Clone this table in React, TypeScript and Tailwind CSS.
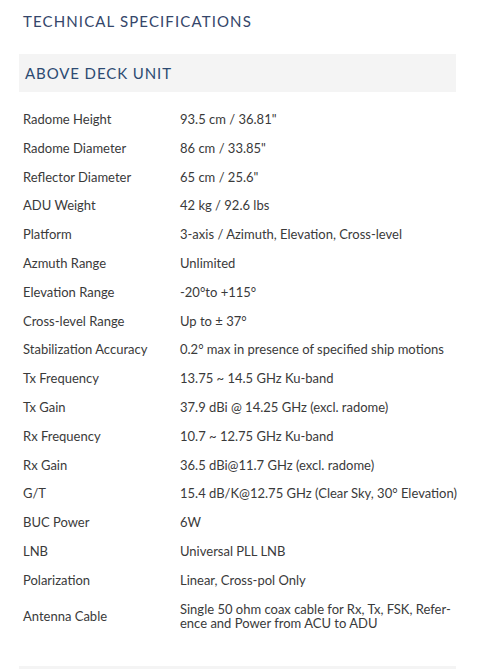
import React from "react";

const rows: [string, React.ReactNode][] = [
  ["Radome Height", "93.5 cm / 36.81\""],
  ["Radome Diameter", "86 cm / 33.85\""],
  ["Reflector Diameter", "65 cm / 25.6\""],
  ["ADU Weight", "42 kg / 92.6 lbs"],
  ["Platform", "3-axis / Azimuth, Elevation, Cross-level"],
  ["Azmuth Range", "Unlimited"],
  ["Elevation Range", "-20°to +115°"],
  ["Cross-level Range", "Up to ± 37°"],
  ["Stabilization Accuracy", "0.2° max in presence of specified ship motions"],
  ["Tx Frequency", "13.75 ~ 14.5 GHz Ku-band"],
  ["Tx Gain", "37.9 dBi @ 14.25 GHz (excl. radome)"],
  ["Rx Frequency", "10.7 ~ 12.75 GHz Ku-band"],
  ["Rx Gain", "36.5 dBi@11.7 GHz (excl. radome)"],
  ["G/T", "15.4 dB/K@12.75 GHz (Clear Sky, 30° Elevation)"],
  ["BUC Power", "6W"],
  ["LNB", "Universal PLL LNB"],
  ["Polarization", "Linear, Cross-pol Only"],
  [
    "Antenna Cable",
    <>
      Single 50 ohm coax cable for Rx, Tx, FSK, Refer-
      <br />
      ence and Power from ACU to ADU
    </>,
  ],
];

export default function App() {
  return (
    <div
      className="w-[487px] h-[669px] overflow-hidden bg-white pl-[19px] pr-[31px]"
      style={{ fontFamily: "Lato, 'Open Sans', sans-serif" }}
    >
      <h1 className="pt-[11px] pl-[4px] text-[15px] leading-[20px] tracking-[0.075em] text-[#34466a] font-normal">
        TECHNICAL SPECIFICATIONS
      </h1>
      <div className="mt-[23px] h-[38px] bg-[#f4f4f4] flex items-center pl-[6px]">
        <h2 className="text-[15px] tracking-[0.06em] text-[#2c4a72] font-normal">
          ABOVE DECK UNIT
        </h2>
      </div>
      <div className="mt-[13px] text-[13px] leading-[14.8px] text-[#3a3a3a]">
        {rows.map(([label, value], i) => (
          <div key={i} className="flex items-center py-[7px] pl-[4px]">
            <div className="w-[157px] shrink-0">{label}</div>
            <div className="flex-1 whitespace-nowrap">{value}</div>
          </div>
        ))}
      </div>
      <div className="mt-[28px] h-[10px] bg-[#f4f4f4]" />
    </div>
  );
}
